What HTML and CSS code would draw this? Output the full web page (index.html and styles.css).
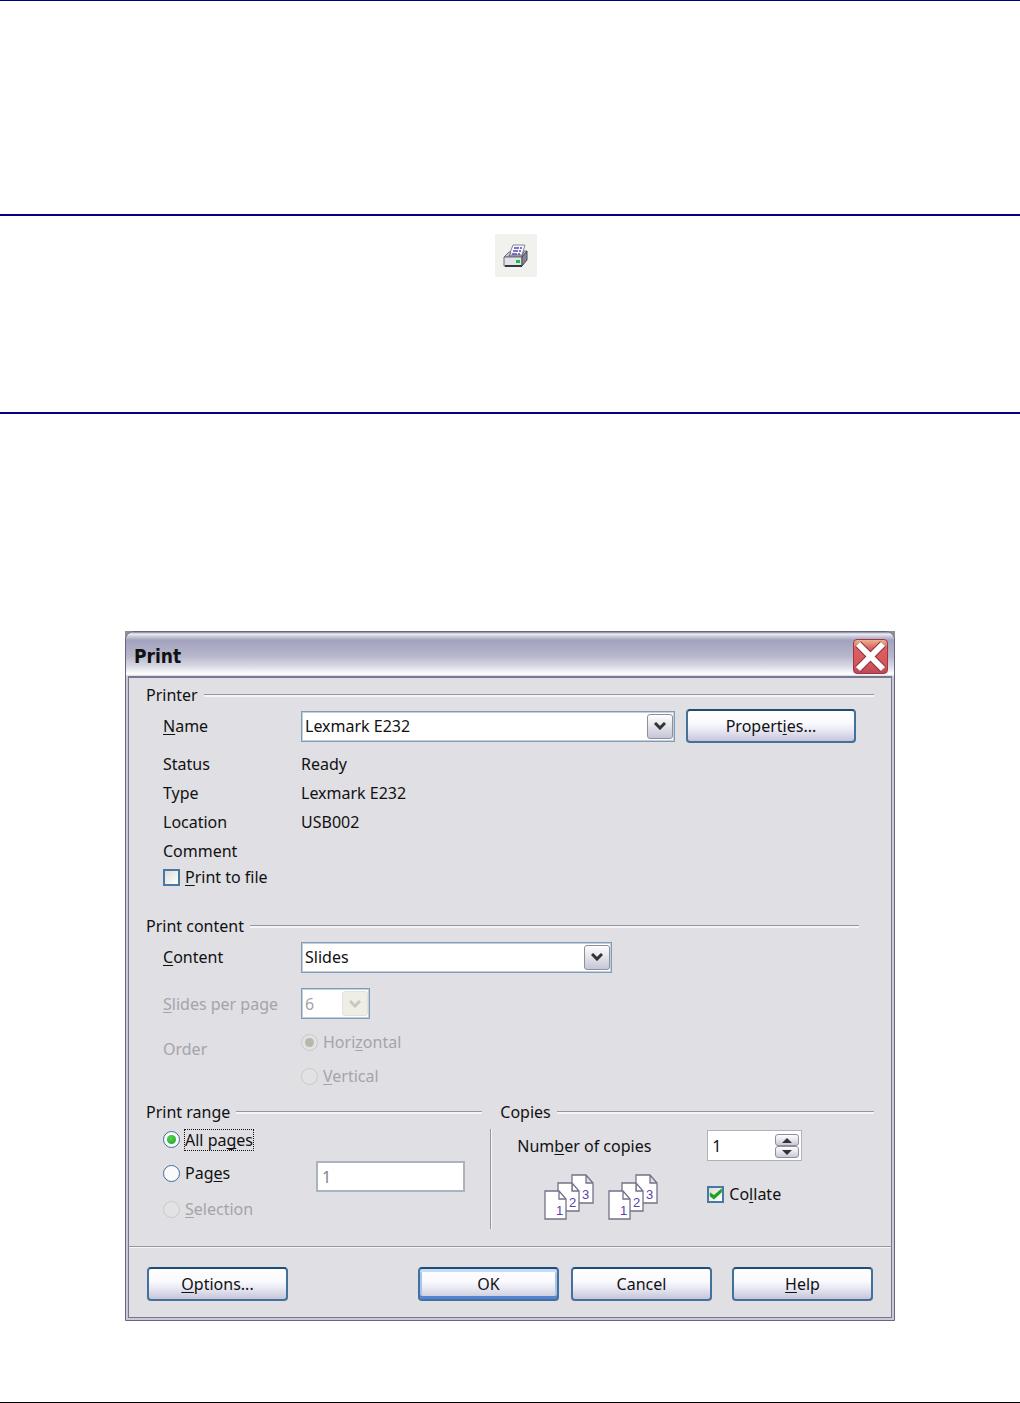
FILE: index.html
```html
<!DOCTYPE html>
<html lang="en">
<head>
  <meta charset="UTF-8">
  <meta name="viewport" content="width=device-width, initial-scale=1.0">
  <title>Print</title>
  <link rel="stylesheet" href="styles.css">
</head>
<body>
  <header class="band band-top"></header>

  <section class="band band-tool">
    <button class="tool-button" type="button" aria-label="Print">
      <svg width="28" height="28" viewBox="0 0 28 28" aria-hidden="true">
        <path d="M7 13l4-10h12l-3 10z" fill="#f6f6fc" stroke="#85869a"/>
        <path d="M12 6h8M11 9h8M10 12h8" stroke="#5549b8" stroke-width="1.500" stroke-dasharray="5 1"/>
        <path d="M2 15l5-5h2l-2 4h13l2-5h3l-5 6z" fill="#c9cad0" stroke="#6c6d78"/>
        <path d="M2 15h18v9H2z" fill="#e2e3e8" stroke="#6c6d78"/>
        <path d="M20 15l5-6v9l-5 6z" fill="#85868f" stroke="#4b4c56"/>
        <path d="M3 24h17" stroke="#34353e" stroke-width="2"/>
        <rect x="14" y="18" width="4" height="3" fill="#16c335"/>
      </svg>
    </button>
  </section>

  <main class="content">
    <div class="frame">
      <form class="dialog">
        <div class="titlebar">
          <h1>Print</h1>
          <button class="close" type="button" aria-label="Close">
            <svg width="35" height="35" viewBox="0 0 35 35" aria-hidden="true">
              <path d="M5 5l25 25M30 5L5 30" stroke="#8d2f3d" stroke-width="8"/>
              <path d="M5 5l25 25M30 5L5 30" stroke="#fff" stroke-width="6"/>
            </svg>
          </button>
        </div>

        <div class="groups">
          <!-- Printer -->
          <section>
            <h2>Printer</h2>
            <div class="row row-printer">
              <label class="name" for="printer"><u>N</u>ame</label>
              <span class="combo combo-wide">
                <select id="printer"><option>Lexmark E232</option></select>
                <span class="drop"><svg width="12" height="8" viewBox="0 0 12 8"><path d="M1 1l5 5 5-5"/></svg></span>
              </span>
              <button class="button button-properties" type="button">Propert<u>i</u>es...</button>
            </div>
            <dl class="info">
              <dt>Status</dt><dd>Ready</dd>
              <dt>Type</dt><dd>Lexmark E232</dd>
              <dt>Location</dt><dd>USB002</dd>
              <dt>Comment</dt><dd></dd>
            </dl>
            <label class="choice to-file"><input type="checkbox"><span><u>P</u>rint to file</span></label>
          </section>

          <!-- Print content -->
          <section class="print-content">
            <h2>Print content</h2>
            <div class="row">
              <label class="name" for="content"><u>C</u>ontent</label>
              <span class="combo combo-content">
                <select id="content"><option>Slides</option></select>
                <span class="drop"><svg width="12" height="8" viewBox="0 0 12 8"><path d="M1 1l5 5 5-5"/></svg></span>
              </span>
            </div>
            <div class="row row-slides disabled">
              <label class="name" for="slides"><u>S</u>lides per page</label>
              <span class="combo combo-small">
                <select id="slides" disabled><option>6</option></select>
                <span class="drop"><svg width="12" height="8" viewBox="0 0 12 8"><path d="M1 1l5 5 5-5"/></svg></span>
              </span>
            </div>
            <div class="row row-order disabled">
              <span class="name" id="order">Order</span>
              <div class="stack" role="radiogroup" aria-labelledby="order">
                <label class="choice"><input type="radio" name="order" checked disabled><span>Hori<u>z</u>ontal</span></label>
                <label class="choice"><input type="radio" name="order" disabled><span><u>V</u>ertical</span></label>
              </div>
            </div>
          </section>

          <!-- Range and copies -->
          <div class="columns">
            <section>
              <h2>Print range</h2>
              <div class="range">
                <label class="choice choice-all"><input type="radio" name="range" checked><span class="focused">All pa<u>g</u>es</span></label>
                <div class="range-pages">
                  <label class="choice"><input type="radio" name="range"><span>Pag<u>e</u>s</span></label>
                  <input class="field" type="text" value="1" aria-label="Page numbers">
                </div>
                <label class="choice disabled"><input type="radio" name="range" disabled><span><u>S</u>election</span></label>
              </div>
            </section>
            <div class="divider"></div>
            <section>
              <h2>Copies</h2>
              <div class="copies">
                <label for="copies">Num<u>b</u>er of copies</label>
                <span class="spinner">
                  <input class="field" id="copies" type="number" value="1" min="1">
                  <span class="spin-buttons">
                    <button type="button" aria-label="More"><svg width="10" height="5" viewBox="0 0 10 5"><path d="M0 5l5-5 5 5z"/></svg></button>
                    <button type="button" aria-label="Fewer"><svg width="10" height="5" viewBox="0 0 10 5"><path d="M0 0l5 5 5-5z"/></svg></button>
                  </span>
                </span>
                <div class="sheets">
                  <svg width="50" height="46" viewBox="0 0 50 46">
                    <path d="M28 1h14l7 8v20H28zM42 1v8h7"/>
                    <path d="M14 9h14l7 8v20H14zM28 9v8h7"/>
                    <path d="M1 17h14l7 8v20H1zM15 17v8h7"/>
                    <text x="12" y="41">1</text>
                    <text x="25" y="33">2</text>
                    <text x="38" y="25">3</text>
                  </svg>
                  <svg width="50" height="46" viewBox="0 0 50 46">
                    <path d="M28 1h14l7 8v20H28zM42 1v8h7"/>
                    <path d="M14 9h14l7 8v20H14zM28 9v8h7"/>
                    <path d="M1 17h14l7 8v20H1zM15 17v8h7"/>
                    <text x="12" y="41">1</text>
                    <text x="25" y="33">2</text>
                    <text x="38" y="25">3</text>
                  </svg>
                </div>
                <label class="choice"><input type="checkbox" checked><span>Co<u>l</u>late</span></label>
              </div>
            </section>
          </div>
        </div>

        <div class="actions">
          <button class="button button-options" type="button"><u>O</u>ptions...</button>
          <button class="button button-default" type="submit">OK</button>
          <button class="button" type="button">Cancel</button>
          <button class="button button-help" type="button"><u>H</u>elp</button>
        </div>
      </form>
    </div>
  </main>
</body>
</html>
```
FILE: styles.css
```css
* {
  margin: 0;
  padding: 0;
  box-sizing: border-box;
}

body {
  display: flex;
  flex-direction: column;
  min-height: 100vh;
  background: #fff;
  border-top: 1px solid #000080;
  border-bottom: 1px solid #000;
  color: #111;
  font-family: "Noto Sans", sans-serif;
  font-size: 16px;
  line-height: 22px;
}

button, input, select {
  font: inherit;
  color: inherit;
}

u {
  text-underline-offset: 2px;
  text-decoration-skip-ink: none;
}

/* Page bands */
.band {
  border-bottom: 2px solid #000080;
}

.band-top {
  height: 215px;
}

.band-tool {
  height: 198px;
  padding: 18px 0 0 12px;
  text-align: center;
}

.tool-button {
  display: inline-flex;
  align-items: center;
  justify-content: center;
  width: 42px;
  height: 43px;
  border: none;
  background: #f1f1ed;
}

.content {
  flex: 1;
  padding: 217px 125px 60px;
}

/* Dialog window */
.frame {
  background: linear-gradient(#8f8f8f 20px, #fff 20px);
}

.dialog {
  padding: 0 2px 2px;
  border: 1px solid #66667f;
  border-radius: 9px 9px 0 0;
  background: #c9c9d9;
}

.titlebar {
  display: flex;
  align-items: center;
  justify-content: space-between;
  height: 44px;
  margin: 0 -2px;
  padding: 4px 6px 0 8px;
  border-radius: 8px 8px 0 0;
  background: linear-gradient(#7e7e98 0, #f0f0f8 2px, #d0d0de 4px, #a3a2bf 8px, #b6b6cb 24px, #d8d8e4 34px, #fff 42px, #d8d8e2 44px);
}

.titlebar h1 {
  font-family: "DejaVu Sans Condensed", "DejaVu Sans", sans-serif;
  font-stretch: condensed;
  font-size: 19px;
  line-height: 24px;
}

.close {
  width: 35px;
  height: 35px;
  border: 1px solid #a23344;
  border-radius: 4px;
  background: linear-gradient(#eab58f, #dc6260 8px, #d85659 24px, #b94a59);
}

.close svg {
  display: block;
  margin: -1px;
}

.groups {
  padding: 6px 17px 20px;
  border: solid #77778f;
  border-width: 2px 1px 0;
  background: #e0dfe4;
}

h2 {
  display: flex;
  align-items: center;
  gap: 6px;
  margin-bottom: 3px;
  font-size: 16px;
  font-weight: normal;
  line-height: 22px;
}

h2::after {
  content: "";
  flex: 1;
  height: 2px;
  border-top: 1px solid #96969c;
  background: #f5f5f7;
}

.row {
  display: flex;
  align-items: center;
  min-height: 34px;
  padding-left: 17px;
}

.row-printer {
  padding-right: 18px;
}

.name {
  flex: 0 0 138px;
}

.disabled {
  color: #a5a4aa;
}

/* Drop-downs */
.combo {
  position: relative;
  height: 31px;
}

.combo select {
  width: 100%;
  height: 100%;
  padding: 0 3px;
  appearance: none;
  border: 1px solid #7f9db9;
  outline: 1px solid #c3d0dc;
  outline-offset: -2px;
  background: #fff;
  opacity: 1;
}

.combo-wide {
  flex: 1;
}

.combo-content {
  width: 311px;
}

.combo-small {
  width: 69px;
}

.drop {
  position: absolute;
  top: 3px;
  right: 2px;
  display: flex;
  align-items: center;
  justify-content: center;
  width: 26px;
  height: 25px;
  border: 1px solid #8e8e9c;
  border-radius: 3px;
  background: linear-gradient(#fff, #c6c6d6);
  color: #333;
  pointer-events: none;
}

.drop path {
  fill: none;
  stroke: currentColor;
  stroke-width: 3;
}

.disabled .drop {
  border-color: #e3e2da;
  background: #eeeee7;
  color: #c9c8be;
}

/* Buttons */
.button {
  width: 141px;
  height: 34px;
  border: 2px solid #44719b;
  border-top-color: #1f4d7a;
  border-radius: 4px;
  background: linear-gradient(#fff 0, #fafaff 12px, #e6e6f2 20px, #c6c5d8);
}

.button-properties {
  width: 170px;
  margin-left: 11px;
}

.button-default {
  box-shadow: inset 0 3px #c5ddf7, inset 0 -3px #5383d2, inset 2px 0 #a5c4ee, inset -2px 0 #a5c4ee;
}

/* Printer details */
.info {
  display: grid;
  grid-template-columns: 138px 1fr;
  grid-auto-rows: 29px;
  align-items: center;
  margin-top: 6px;
  padding-left: 17px;
}

/* Check boxes and radio buttons */
.choice {
  display: flex;
  align-items: center;
  gap: 5px;
}

.choice input {
  flex: none;
  display: grid;
  place-items: center;
  width: 17px;
  height: 17px;
  appearance: none;
  border: 1px solid #3d6e9b;
  background: linear-gradient(135deg, #dcdcd7, #fff);
}

.choice input[type="checkbox"] {
  border-width: 2px;
  border-color: #4878a3;
}

.choice input[type="radio"] {
  border-radius: 50%;
  background: #fafafa;
}

.choice input[type="radio"]:checked::before {
  content: "";
  width: 9px;
  height: 9px;
  border-radius: 50%;
  background: radial-gradient(circle at 40% 35%, #55d551, #1e9d1e);
}

.choice input[type="checkbox"]:checked::before {
  content: "";
  width: 13px;
  height: 12px;
  background: #21a121;
  clip-path: polygon(4% 35%, 36% 58%, 96% 2%, 96% 36%, 36% 96%, 4% 68%);
}

.choice input[type="radio"]:disabled {
  border-color: #cbcac0;
  background: #e2e1e4;
}

.choice input[type="radio"]:disabled:checked::before {
  background: #b8b7ac;
}

.to-file {
  height: 24px;
  padding-left: 17px;
}

/* Print content */
.print-content {
  margin-top: 26px;
  padding-right: 15px;
}

.row-slides {
  min-height: 31px;
  margin-top: 14px;
}

.row-order {
  margin-top: 6px;
}

.row-order .name {
  padding-bottom: 20px;
}

.stack .choice {
  height: 34px;
}

/* Print range and copies */
.columns {
  display: grid;
  grid-template-columns: 9fr 18px 10fr;
  margin-top: 8px;
}

.columns h2 {
  margin-bottom: 0;
}

.divider {
  justify-self: center;
  width: 2px;
  height: 100px;
  margin: 28px 0 -3px;
  border-left: 1px solid #96969c;
  background: #f5f5f7;
}

.range {
  padding: 0 17px;
}

.range .choice {
  height: 34px;
}

.range .choice-all {
  height: 33px;
}

.range-pages {
  display: grid;
  grid-template-columns: 153px 1fr;
  align-items: start;
  height: 36px;
}

.range-pages .field {
  align-self: end;
}

.focused {
  outline: 1px dotted #111;
  line-height: 20px;
}

.field {
  width: 100%;
  height: 31px;
  padding: 0 4px;
  border: 2px solid #a9b4bd;
  background: #fff;
}

.range .field {
  color: #85848a;
}

.copies {
  display: grid;
  grid-template-columns: 190px 1fr;
  row-gap: 13px;
  align-items: center;
  padding: 7px 0 0 17px;
}

.copies .choice {
  align-self: start;
  height: 40px;
}

.spinner {
  position: relative;
  width: 95px;
}

.spinner .field {
  display: block;
  border-width: 1px;
  appearance: textfield;
}

.spinner .field::-webkit-inner-spin-button {
  appearance: none;
}

.spin-buttons {
  position: absolute;
  top: 4px;
  right: 3px;
  display: flex;
  flex-direction: column;
  width: 24px;
}

.spin-buttons button {
  display: flex;
  align-items: center;
  justify-content: center;
  height: 12px;
  border: 1px solid #8e8e9c;
  border-radius: 3px;
  background: linear-gradient(#fff, #c9c9d8);
}

.spin-buttons svg {
  fill: #333;
}

.sheets {
  display: flex;
  gap: 14px;
  padding-left: 27px;
}

.sheets path {
  fill: #fff;
  stroke: #727388;
  stroke-width: 1.3;
}

.sheets text {
  fill: #5b3fae;
  font-family: "Liberation Sans", sans-serif;
  font-size: 13px;
}

/* Bottom buttons */
.actions {
  display: flex;
  gap: 12px;
  padding: 20px 18px 16px;
  border: 1px solid #77778f;
  border-top-color: #96969c;
  background: #e0dfe4;
  box-shadow: inset 0 1px #f5f5f7;
}

.button-options {
  margin-right: auto;
}

.button-help {
  margin-left: 8px;
}
```
